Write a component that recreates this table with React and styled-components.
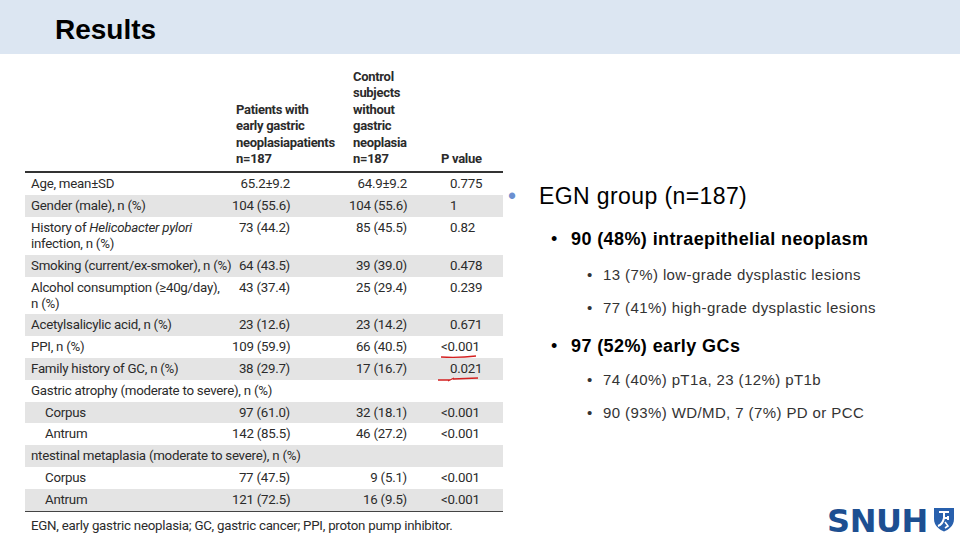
import React from "react";
import styled, { createGlobalStyle } from "styled-components";

const Global = createGlobalStyle`
  html, body { margin: 0; padding: 0; background: #fff; }
  body { width: 960px; height: 540px; overflow: hidden; }
`;

const Slide = styled.div`
  width: 960px;
  height: 540px;
  position: relative;
  display: flex;
  flex-direction: column;
  background: #fff;
  font-family: "Liberation Sans", Arial, sans-serif;
`;

const TitleBar = styled.header`
  flex: none;
  height: 54px;
  background: #dce6f2;
  display: flex;
  align-items: center;
  padding-left: 55px;
  box-sizing: border-box;
`;

const Title = styled.h1`
  margin: 0;
  font-size: 28px;
  font-weight: bold;
  color: #000;
  padding-top: 6px;
`;

const Body = styled.div`
  display: flex;
  flex: 1;
`;

const TableWrap = styled.div`
  flex: none;
  margin-left: 25px;
  margin-top: 15px;
  width: 478px;
  font-family: Roboto, "Liberation Sans", sans-serif;
  color: #2b2b2b;
`;

const cols = "207px 117px 88px 66px";

const Grid = styled.div`
  display: grid;
  grid-template-columns: ${cols};
`;

const HeadCell = styled.div`
  font-size: 13px;
  font-weight: bold;
  letter-spacing: -0.3px;
  line-height: 16.4px;
  padding-left: 4px;
  align-self: end;
  padding-bottom: 2px;
  white-space: nowrap;
`;

const HeadRule = styled.div`
  grid-column: 1 / -1;
  height: 2px;
  background: #333;
  margin-top: 2px;
`;

const BottomRule = styled.div`
  height: 1.5px;
  background: #444;
`;

const Row = styled.div`
  grid-column: 1 / -1;
  display: grid;
  grid-template-columns: ${cols};
  background: ${(p) => (p.shade ? "#e4e4e4" : "#fff")};
  font-size: 13.3px;
  letter-spacing: -0.25px;
  line-height: 16px;
  padding: 3px 0 2.8px;
`;

const Label = styled.div`
  padding-left: ${(p) => (p.indent ? 20 : 6)}px;
  white-space: nowrap;
  i { font-style: italic; }
`;

const Num = styled.div`
  text-align: right;
  white-space: nowrap;
  padding-right: ${(p) => p.pr}px;
`;

const PCell = styled.div`
  padding-left: 13px;
  white-space: nowrap;
  position: relative;
  text-indent: ${(p) => (p.hang ? -9 : 0)}px;
`;

const Mark = styled.svg`
  position: absolute;
  left: ${(p) => p.x}px;
  top: 16px;
  overflow: visible;
`;

const Footnote = styled.div`
  font-size: 13.3px;
  letter-spacing: -0.25px;
  padding: 6px 0 0 6px;
  white-space: nowrap;
`;

const Bullets = styled.div`
  margin-left: 5px;
  padding-top: 129px;
  display: flex;
  flex-direction: column;
`;

const Item = styled.div`
  display: flex;
  align-items: baseline;
  padding-left: ${(p) => p.indent}px;
  margin-top: ${(p) => p.mt}px;
  color: ${(p) => p.color};
  font-size: ${(p) => p.size}px;
  letter-spacing: ${(p) => p.ls}px;
  font-weight: ${(p) => (p.bold ? "bold" : "normal")};
  white-space: nowrap;
`;

const Dot = styled.span`
  width: ${(p) => p.w}px;
  flex: none;
  color: ${(p) => p.color};
  font-weight: normal;
  letter-spacing: 0;
`;

const Logo = styled.div`
  position: absolute;
  right: 5px;
  bottom: 0;
  display: flex;
  align-items: flex-start;
  gap: 5px;
`;

const LogoText = styled.span`
  font-family: "DejaVu Sans", "Liberation Sans", sans-serif;
  font-weight: bold;
  font-size: 32px;
  color: #1d4f91;
  letter-spacing: -0.4px;
  line-height: normal;
`;

const ShieldBox = styled.svg`
  margin-top: 5px;
`;

const rows = [
  { label: "Age, mean±SD", a: "65.2±9.2", b: "64.9±9.2", p: "0.775" },
  { label: "Gender (male), n (%)", a: "104 (55.6)", b: "104 (55.6)", p: "1" },
  {
    label: (
      <>
        History of <i>Helicobacter pylori</i>
        <br />
        infection, n (%)
      </>
    ),
    a: "73 (44.2)",
    b: "85 (45.5)",
    p: "0.82",
  },
  { label: "Smoking (current/ex-smoker), n (%)", a: "64 (43.5)", b: "39 (39.0)", p: "0.478" },
  {
    label: (
      <>
        Alcohol consumption (≥40g/day),
        <br />n (%)
      </>
    ),
    a: "43 (37.4)",
    b: "25 (29.4)",
    p: "0.239",
  },
  { label: "Acetylsalicylic acid, n (%)", a: "23 (12.6)", b: "23 (14.2)", p: "0.671" },
  { label: "PPI, n (%)", a: "109 (59.9)", b: "66 (40.5)", p: "<0.001", mark: 1 },
  { label: "Family history of GC, n (%)", a: "38 (29.7)", b: "17 (16.7)", p: "0.021", mark: 2 },
  { label: "Gastric atrophy (moderate to severe), n (%)", span: true },
  { label: "Corpus", indent: true, a: "97 (61.0)", b: "32 (18.1)", p: "<0.001" },
  { label: "Antrum", indent: true, a: "142 (85.5)", b: "46 (27.2)", p: "<0.001" },
  { label: "ntestinal metaplasia (moderate to severe), n (%)", span: true },
  { label: "Corpus", indent: true, a: "77 (47.5)", b: "9 (5.1)", p: "<0.001" },
  { label: "Antrum", indent: true, a: "121 (72.5)", b: "16 (9.5)", p: "<0.001" },
];

const SpanLabel = styled(Label)`
  grid-column: 1 / -1;
`;

function RedMark({ kind }) {
  if (kind === 1)
    return (
      <Mark x={4} width="36" height="4">
        <path d="M0 2 Q18 3 35 1" stroke="#d42020" strokeWidth="1.3" fill="none" />
      </Mark>
    );
  return (
    <Mark x={1} width="42" height="6">
      <path d="M0 3 L12 3 M10 4 L16 1 M15 2 L40 1" stroke="#d42020" strokeWidth="1.3" fill="none" />
    </Mark>
  );
}

function Shield() {
  return (
    <ShieldBox width="22" height="25" viewBox="0 0 22 25">
      <path d="M1 1 H21 V12 C21 19 15 23 11 24.5 C7 23 1 19 1 12 Z" fill="#2860ad" />
      <path d="M6 5 H16 M11 5 V11 M11 11 L15 11 M15 9 V13 M11 11 C10 16 8 18 5 19" stroke="#fff" strokeWidth="2" fill="none" />
      <path d="M12 15 L15 19 L12 21" stroke="#fff" strokeWidth="1.6" fill="none" />
    </ShieldBox>
  );
}

export default function App() {
  return (
    <>
      <Global />
      <Slide>
        <TitleBar>
          <Title>Results</Title>
        </TitleBar>
        <Body>
          <TableWrap>
            <Grid>
              <HeadCell />
              <HeadCell>
                Patients with
                <br />
                early gastric
                <br />
                neoplasiapatients
                <br />
                n=187
              </HeadCell>
              <HeadCell>
                Control
                <br />
                subjects
                <br />
                without
                <br />
                gastric
                <br />
                neoplasia
                <br />
                n=187
              </HeadCell>
              <HeadCell>P value</HeadCell>
              <HeadRule />
              {rows.map((r, i) =>
                r.span ? (
                  <Row key={i} shade={i % 2 === 1}>
                    <SpanLabel>{r.label}</SpanLabel>
                  </Row>
                ) : (
                  <Row key={i} shade={i % 2 === 1}>
                    <Label indent={r.indent}>{r.label}</Label>
                    <Num pr={59}>{r.a}</Num>
                    <Num pr={30}>{r.b}</Num>
                    <PCell hang={r.p.startsWith("<")}>
                      {r.p}
                      {r.mark && <RedMark kind={r.mark} />}
                    </PCell>
                  </Row>
                )
              )}
            </Grid>
            <BottomRule />
            <Footnote>EGN, early gastric neoplasia; GC, gastric cancer; PPI, proton pump inhibitor.</Footnote>
          </TableWrap>
          <Bullets>
            <Item indent={0} mt={0} size={23} ls={0.4} color="#000">
              <Dot w={31} color="#6b8fd0">•</Dot>EGN group (n=187)
            </Item>
            <Item indent={43} mt={19} size={18} ls={0.4} bold color="#000">
              <Dot w={20} color="#000">•</Dot>90 (48%) intraepithelial neoplasm
            </Item>
            <Item indent={79} mt={16} size={15} ls={0.4} color="#333">
              <Dot w={16} color="#333">•</Dot>13 (7%) low-grade dysplastic lesions
            </Item>
            <Item indent={79} mt={16} size={15} ls={0.4} color="#333">
              <Dot w={16} color="#333">•</Dot>77 (41%) high-grade dysplastic lesions
            </Item>
            <Item indent={43} mt={20} size={18} ls={0.4} bold color="#000">
              <Dot w={20} color="#000">•</Dot>97 (52%) early GCs
            </Item>
            <Item indent={79} mt={14} size={15} ls={0.4} color="#333">
              <Dot w={16} color="#333">•</Dot>74 (40%) pT1a, 23 (12%) pT1b
            </Item>
            <Item indent={79} mt={16} size={15} ls={0.4} color="#333">
              <Dot w={16} color="#333">•</Dot>90 (93%) WD/MD, 7 (7%) PD or PCC
            </Item>
          </Bullets>
        </Body>
        <Logo>
          <LogoText>SNUH</LogoText>
          <Shield />
        </Logo>
      </Slide>
    </>
  );
}
